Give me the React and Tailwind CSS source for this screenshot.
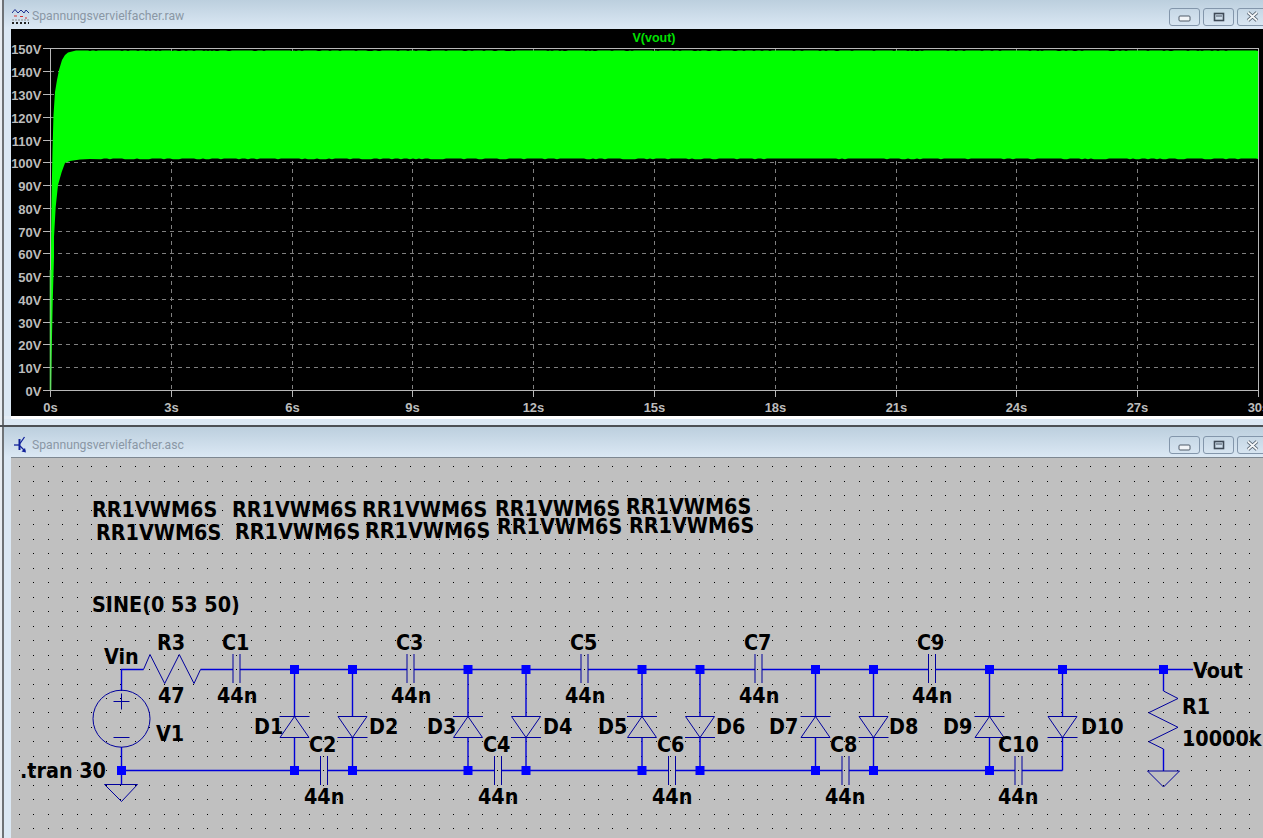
import React from "react";

function rand(i) {
  const x = Math.sin(i * 12.9898) * 43758.5453;
  return x - Math.floor(x);
}

function envelope() {
  const pts = [
    [50.5, 390], [50.5, 300], [51, 250], [51.5, 200], [52.5, 150], [53.5, 115], [55, 92], [57, 80], [59, 70], [62, 60], [65, 55], [68, 52.5], [72, 51.5],
  ];
  for (let x = 76; x < 1258; x += 2) {
    pts.push([x, 50.4 + (rand(x) > 0.8 ? 0.7 : 0)]);
  }
  pts.push([1258, 51], [1258, 159]);
  for (let x = 1256; x > 100; x -= 3) {
    pts.push([x, 158.4 + (rand(x + 7) > 0.7 ? 0.9 : 0)]);
  }
  pts.push([90, 159], [80, 159.5], [70, 161], [65, 163], [61.7, 172], [58, 185], [55.7, 207], [54, 237], [54, 257], [52.7, 303], [51.5, 362], [51, 390]);
  return pts.map((p) => p.join(",")).join(" ");
}

const yTicks = Array.from({ length: 16 }, (_, i) => i);
const xTicks = Array.from({ length: 11 }, (_, i) => i);
const yOf = (i) => Math.round(390 - i * 22.77) + 0.5;
const xOf = (i) => Math.round(50 + i * 120.8) + 0.5;

function Chrome() {
  const common = "flex h-[18px] w-[31px] items-center justify-center rounded-[3px] border border-[#8396ab]";
  return (
    <div className="-mr-[5px] flex items-center gap-[3px]">
      <div className={common}>
        <svg width="13" height="8" viewBox="0 0 13 8" className="mt-[3px]"><rect x="1" y="2" width="11" height="5" rx="1" fill="#f2f5f8" stroke="#4e5b69" /></svg>
      </div>
      <div className={common}>
        <svg width="12" height="10" viewBox="0 0 12 10"><rect x="1.5" y="1.5" width="9" height="7" fill="none" stroke="#3f4a57" strokeWidth="1.6" /><rect x="3" y="3" width="6" height="2" fill="#8b98a6" /></svg>
      </div>
      <div className={common}>
        <svg width="13" height="11" viewBox="0 0 13 11"><path d="M2 1.5 L11 9.5 M11 1.5 L2 9.5" stroke="#4e5b69" strokeWidth="3.6" /><path d="M2 1.5 L11 9.5 M11 1.5 L2 9.5" stroke="#f4f6f8" strokeWidth="1.8" /></svg>
      </div>
    </div>
  );
}

function WaveIcon() {
  return (
    <svg width="17" height="17" viewBox="0 0 17 17">
      <path d="M0 5 L3 1.5 L6 5 L9 2 L12 5 L14 2 L17 5" fill="none" stroke="#1c2f8f" strokeWidth="1" />
      <path d="M2 8 H5 M8 8.5 H11 M13 10 H15" stroke="#d4322e" strokeWidth="1.2" />
      <path d="M0 12 H17" stroke="#8c8c8c" strokeWidth="1" strokeDasharray="2 1" />
      <path d="M0 15 H17" stroke="#222222" strokeWidth="2" strokeDasharray="2 2" />
    </svg>
  );
}

function TransistorIcon() {
  return (
    <svg width="13" height="17" viewBox="0 0 13 17">
      <path d="M0 9 H5" stroke="#10209a" strokeWidth="1.3" />
      <path d="M5.5 3 V14" stroke="#10209a" strokeWidth="2" />
      <path d="M6 7.5 L10.5 1 M6 10 L11 15" stroke="#10209a" strokeWidth="1.3" />
      <path d="M12 16.5 L7.5 15.5 L11 12 Z" fill="#10209a" />
    </svg>
  );
}

function TitleBar({ title, icon, height }) {
  return (
    <div className={`flex items-center justify-between bg-gradient-to-b from-[#bccfde] to-[#dbe8f4] pl-[8px] ${height}`}>
      <div className="flex items-center gap-[3px]">
        <div className="flex w-[17px] justify-center">{icon}</div>
        <span className="text-[12.2px] text-[#8a97a5] [font-family:'Roboto',sans-serif]">{title}</span>
      </div>
      <Chrome />
    </div>
  );
}

function Plot() {
  return (
    <svg viewBox="11 29 1252 387" className="block h-[387px] w-[1252px] bg-black [font-family:'Liberation_Sans',sans-serif]">
      {yTicks.slice(1, 15).map((i) => (
        <line key={i} x1="50" x2="1258" y1={yOf(i)} y2={yOf(i)} stroke="#808080" strokeDasharray="4 4" />
      ))}
      {xTicks.slice(1, 10).map((i) => (
        <line key={i} x1={xOf(i)} x2={xOf(i)} y1="49" y2="390" stroke="#808080" strokeDasharray="4 4" />
      ))}
      <polygon points={envelope()} fill="#00ff00" />
      <rect x="50.5" y="48.5" width="1208" height="342" fill="none" stroke="#b8b8b8" />
      <line x1="50.5" x2="50.5" y1="270" y2="390" stroke="#66dd66" strokeWidth="1.6" />
      {yTicks.map((i) => (
        <g key={i}>
          <line x1="43" x2="50" y1={yOf(i)} y2={yOf(i)} stroke="#b8b8b8" />
          <text x="41.5" y={yOf(i) + 5} textAnchor="end" fill="#bcbcbc" fontSize="13" fontWeight="700">{i * 10}V</text>
        </g>
      ))}
      {xTicks.map((i) => (
        <g key={i}>
          <line x1={xOf(i)} x2={xOf(i)} y1="391" y2="397" stroke="#b8b8b8" />
          <text x={xOf(i)} y="412" textAnchor="middle" fill="#bcbcbc" fontSize="13" fontWeight="700">{i * 3}s</text>
        </g>
      ))}
      <text x="654" y="42" textAnchor="middle" fill="#00e000" fontSize="12.5" fontWeight="700">V(vout)</text>
    </svg>
  );
}

const topNodes = [294.5, 352.5, 468, 526, 642, 700, 815.5, 873.5, 989.5, 1062.5, 1163.5];
const botNodes = [121.5, 294.5, 352.5, 468, 526, 642, 700, 815.5, 873.5, 989.5];
const upDiodes = [294.5, 468, 642, 815.5, 989.5];
const downDiodes = [352.5, 526, 700, 873.5, 1062.5];
const topCaps = [236.5, 410.5, 584.5, 758.5, 932];
const botCaps = [324, 498, 672, 845.5, 1018.5];

const labels = [
  ["RR1VWM6S", 92, 517], ["RR1VWM6S", 232, 517], ["RR1VWM6S", 362, 517], ["RR1VWM6S", 495, 516], ["RR1VWM6S", 626, 514],
  ["RR1VWM6S", 96, 540], ["RR1VWM6S", 235, 539], ["RR1VWM6S", 365, 538], ["RR1VWM6S", 497, 534], ["RR1VWM6S", 629, 533],
  ["SINE(0 53 50)", 92, 612],
  ["Vin", 104, 664], ["R3", 157, 650], ["47", 158, 703], ["V1", 156, 741], [".tran 30", 20, 778],
  ["C1", 222, 650], ["C3", 396, 650], ["C5", 570, 650], ["C7", 744, 650], ["C9", 917, 650],
  ["44n", 217, 703], ["44n", 391, 703], ["44n", 565, 703], ["44n", 739, 703], ["44n", 912, 703],
  ["C2", 309, 752], ["C4", 483, 752], ["C6", 657, 752], ["C8", 830, 752], ["C10", 998, 752],
  ["44n", 304, 804], ["44n", 478, 804], ["44n", 652, 804], ["44n", 825, 804], ["44n", 998, 804],
  ["D1", 254, 734], ["D3", 427, 734], ["D5", 598, 734], ["D7", 769, 734], ["D9", 943, 734],
  ["D2", 369, 734], ["D4", 543, 734], ["D6", 716, 734], ["D8", 889, 734], ["D10", 1081, 734],
  ["Vout", 1193, 678], ["R1", 1182, 714], ["10000k", 1182, 746],
];

const dots = [];
for (let r = 0; r < 26; r++) {
  for (let c = 0; c < 86; c++) {
    dots.push([Math.round(19 + c * 14.475), Math.round(466.4 + r * 14.475)]);
  }
}

function Schematic() {
  const wire = "#0000d8";
  const part = "#00009c";
  return (
    <svg viewBox="11 458 1252 380" className="block h-[380px] w-[1252px] bg-[#c0c0c0] [font-family:'DejaVu_Sans',sans-serif]">
      {dots.map(([x, y]) => (
        <rect key={`${x}-${y}`} x={x} y={y} width="1" height="1" fill="#000000" />
      ))}
      <g fill="none" stroke={wire} strokeWidth="1.4">
        <path d="M121.5 691 V669.5 H143.5" />
        <path d="M200.5 669.5 H233" />
        {topCaps.map((x, i) => (
          <path key={x} d={`M${x + 3.5} 669.5 H${i < 4 ? topCaps[i + 1] - 3.5 : 1193}`} />
        ))}
        <path d="M121.5 747 V785" />
        <path d={`M121.5 770.5 H${botCaps[0] - 3.5}`} />
        {botCaps.map((x, i) => (
          <path key={x} d={`M${x + 3.5} 770.5 H${i < 4 ? botCaps[i + 1] - 3.5 : 1062.5}`} />
        ))}
        {upDiodes.map((x) => (
          <path key={x} d={`M${x} 669.5 V716.5 M${x} 737.5 V770.5`} />
        ))}
        {downDiodes.map((x) => (
          <path key={x} d={`M${x} 669.5 V716.5 M${x} 737.5 V770.5`} />
        ))}
        <path d="M1163.5 669.5 V691 M1163.5 749 V771" />
      </g>
      <g fill="none" stroke={part} strokeWidth="1">
        <path d="M143.5 669.5 L150 654.5 L164.7 683.5 L179.3 654.5 L194 683.5 L200.5 669.5" />
        <circle cx="121.5" cy="718.7" r="28.5" />
        <path d="M113.5 701.5 H129.5 M121.5 693.5 V709.5 M113.5 737.5 H129.5" />
        <path d="M104.5 784.5 H137.5 L121.5 801.5 Z" />
        <path d="M1163.5 691 L1178 698.5 L1148.7 712.7 L1178 727.3 L1148.7 741.7 L1163.5 749" />
        <path d="M1147.5 771 H1179.5 L1163.5 787 Z" />
        {topCaps.map((x) => (
          <path key={x} d={`M${x - 3.5} 654 V683 M${x + 3.5} 654 V683`} />
        ))}
        {botCaps.map((x) => (
          <path key={x} d={`M${x - 3.5} 756 V785 M${x + 3.5} 756 V785`} />
        ))}
        {upDiodes.map((x) => (
          <path key={x} d={`M${x - 15} 716.5 H${x + 15} M${x} 716.5 L${x + 14.5} 737.5 H${x - 14.5} Z`} />
        ))}
        {downDiodes.map((x) => (
          <path key={x} d={`M${x - 15} 737.5 H${x + 15} M${x} 737.5 L${x + 14.5} 716.5 H${x - 14.5} Z`} />
        ))}
      </g>
      {topNodes.map((x) => (
        <rect key={x} x={x - 4.5} y="665" width="9" height="9" fill="#0000ff" />
      ))}
      {botNodes.map((x) => (
        <rect key={x} x={x - 4.5} y="766" width="9" height="9" fill="#0000ff" />
      ))}
      {labels.map(([t, x, y], i) => (
        <text key={i} transform={`translate(${x} ${y}) scale(0.915 1)`} fill="#000000" fontSize="21" fontWeight="700">{t}</text>
      ))}
    </svg>
  );
}

export default function App() {
  return (
    <div className="flex h-[838px] w-full flex-col overflow-hidden bg-[#e3ecf5]">
      <div className="flex h-[425px] shrink-0 flex-col border-l-2 border-[#e8edf2]">
        <div className="flex h-full flex-col border-l-2 border-[#6e7276]">
          <TitleBar title="Spannungsvervielfacher.raw" icon={<WaveIcon />} height="h-[28px] pt-[5px]" />
          <div className="bg-[#dbe8f4] pl-[7px] pt-[1px]">
            <Plot />
          </div>
          <div className="ml-[7px] h-[3px] bg-white" />
          <div className="flex-1 bg-[#dbe8f4]" />
        </div>
      </div>
      <div className="h-[2px] shrink-0 bg-[#4c5055]" />
      <div className="flex min-h-0 flex-1 flex-col border-l-2 border-[#e8edf2]">
        <div className="flex h-full flex-col border-l-2 border-[#6e7276]">
          <TitleBar title="Spannungsvervielfacher.asc" icon={<TransistorIcon />} height="h-[30px] pt-[6px]" />
          <div className="bg-[#dbe8f4] pl-[7px]">
            <div className="h-[1px] bg-[#7d8791]" />
            <Schematic />
          </div>
        </div>
      </div>
    </div>
  );
}
